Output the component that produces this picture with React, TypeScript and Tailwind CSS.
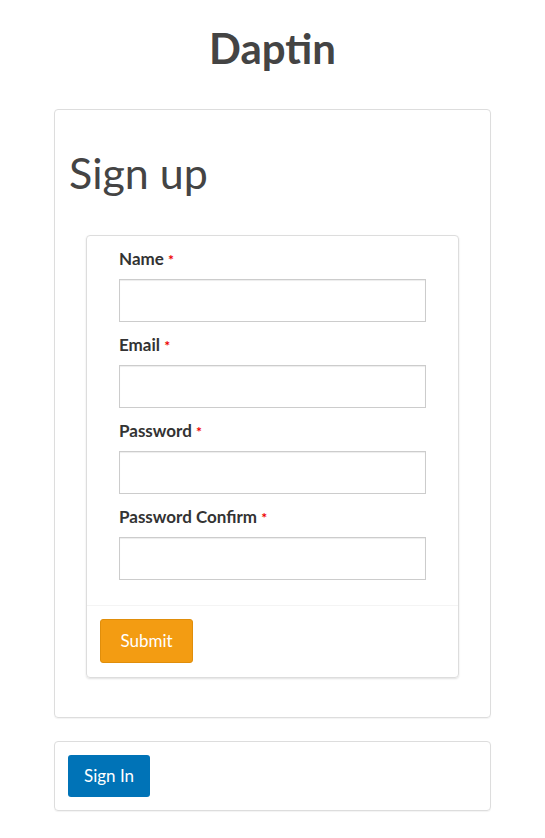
const fields = ["Name", "Email", "Password", "Password Confirm"];

export default function App() {
  return (
    <div
      className="min-h-screen bg-white text-[#333]"
      style={{ fontFamily: "Lato, 'Noto Sans', sans-serif" }}
    >
      <h1 className="pt-[24px] text-center text-[42px] font-bold leading-[48px] text-[#444]">
        Daptin
      </h1>

      <div className="mx-[54px] mt-[37px] rounded-[4px] border border-[#ddd] px-[14px] pb-[39px] pt-[36px] shadow-[0_1px_1px_rgba(0,0,0,0.05)]">
        <h2 className="text-[43px] font-normal leading-[54px] text-[#444]">Sign up</h2>

        <div className="mx-[17px] mt-[35px] rounded-[4px] border border-[#ddd] shadow-[0_1px_2px_rgba(0,0,0,0.12)]">
          <div className="flex flex-col gap-[14px] px-[32px] pb-[25px] pt-[14px]">
            {fields.map((f) => (
              <div key={f} className="flex flex-col gap-[10px]">
                <label className="text-[17px] font-bold leading-[18px] text-[#333]">
                  {f} <span className="text-[14px] text-[#e00]">*</span>
                </label>
                <input
                  type={f.startsWith("Password") ? "password" : "text"}
                  className="h-[43px] w-[307px] border border-[#ccc] bg-white px-3 shadow-[inset_0_1px_1px_rgba(0,0,0,0.075)] outline-none"
                />
              </div>
            ))}
          </div>
          <div className="border-t border-[#f4f4f4] px-[13px] pb-[14px] pt-[13px]">
            <button className="h-[44px] w-[93px] rounded-[3px] border border-[#e08e0b] bg-[#f39c12] text-[17px] text-white">
              Submit
            </button>
          </div>
        </div>
      </div>

      <div className="mx-[54px] mt-[23px] rounded-[4px] border border-[#ddd] p-[13px] shadow-[0_1px_1px_rgba(0,0,0,0.05)]">
        <button className="h-[42px] w-[82px] rounded-[3px] bg-[#0073b7] text-[17px] text-white">
          Sign In
        </button>
      </div>
    </div>
  );
}
